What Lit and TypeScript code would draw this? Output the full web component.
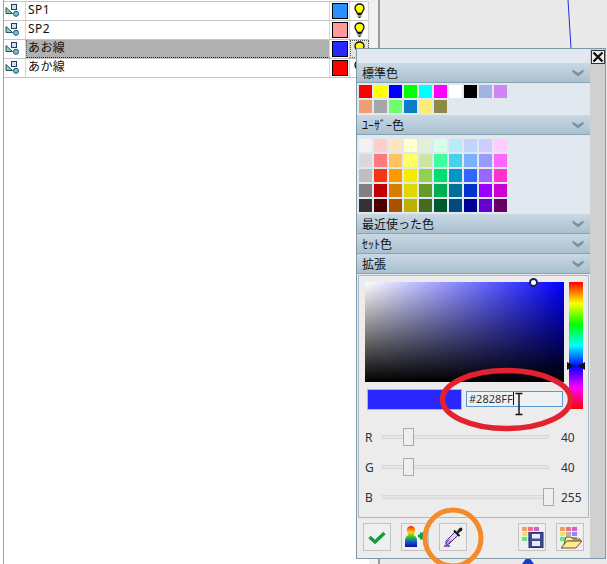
import { LitElement, html, css, svg } from "lit";
import { customElement } from "lit/decorators.js";

const STD = ["#ff0000","#ffff00","#0000ff","#00ff00","#00ffff","#ff00ff","#ffffff","#000000","#9fb4e3","#d085f5",
  "#ee9f72","#a6a6a6","#6cff6c","#0b7cc7","#ffec73","#8c8a46"];
const USER = [
  "#f2f2f2","#ffcccc","#ffe4c2","#ffffcc","#e4efd8","#d4ffe8","#b4ecfa","#c0d4ff","#ccccff","#ffccff",
  "#d9d9d9","#ff7a7a","#ffc25c","#ffff66","#cde5a3","#3dff9e","#45d0ec","#7ab0ff","#9999ff","#ff66ff",
  "#bfbfbf","#f53516","#ff9900","#f5ec00","#92d050","#00e070","#0098c8","#3366ff","#9966ff","#ff33cc",
  "#808080","#c00000","#d67e00","#e0d800","#669a2a","#00b050","#007098","#0033cc","#9900ff","#cc00cc",
  "#333333","#4d0000","#a85200","#bdb000","#446b1f","#005a2b","#004a80","#000099","#6600cc","#660066"];
const ROWS = [
  { name: "SP1", color: "#2a90ff", sel: false },
  { name: "SP2", color: "#ff9a9a", sel: false },
  { name: "あお線", color: "#2828ff", sel: true },
  { name: "あか線", color: "#ff0000", sel: false },
];
const SLIDERS = [
  { l: "R", v: 40, x: 21 },
  { l: "G", v: 40, x: 21 },
  { l: "B", v: 255, x: 161 },
];

const chevron = html`<svg class="chev" width="12" height="8" viewBox="0 0 12 8"><path d="M0.5 0.5 L6 4 L11.5 0.5 L11.5 3 L6 7.5 L0.5 3 Z" fill="#7f8e99"/></svg>`;
const rowIcon = html`<svg class="ri" width="16" height="16" viewBox="0 0 16 16">
  <path d="M1 4.5 L1 10.5 L7.5 10.5 Z" fill="#8fd0b0" stroke="#1f4f6a"/>
  <rect x="6.5" y="1.5" width="5" height="5" fill="#cfe0f0" stroke="#1f3f6a"/>
  <circle cx="11" cy="10.8" r="2.5" fill="#6fc8d0" stroke="#1f4f6a"/>
</svg>`;
const bulb = html`<svg width="11" height="16" viewBox="0 0 11 16">
  <path d="M5.5 1 C2.6 1 1 3 1 5.2 C1 7.4 3 8.4 3.3 10.5 L7.7 10.5 C8 8.4 10 7.4 10 5.2 C10 3 8.4 1 5.5 1 Z" fill="#ffff00" stroke="#111" stroke-width="1.3"/>
  <path d="M3.5 11.5 H7.5 M3.5 13 H7.5 M4.5 14.5 H6.5" stroke="#222" stroke-width="1.1"/>
</svg>`;
const grid = svg`
  <rect x="1" y="1" width="5" height="4" fill="#f0a070"/><rect x="7" y="1" width="5" height="4" fill="#f07080"/><rect x="13" y="1" width="5" height="4" fill="#d060d0"/>
  <rect x="1" y="6" width="5" height="4" fill="#f0e070"/><rect x="7" y="6" width="5" height="4" fill="#b0b0b0"/><rect x="13" y="6" width="5" height="4" fill="#a080e0"/>
  <rect x="1" y="11" width="5" height="4" fill="#70e080"/><rect x="7" y="11" width="5" height="4" fill="#70c0d0"/><rect x="13" y="11" width="5" height="4" fill="#80a0e0"/>`;

@customElement("app-root")
export class AppRoot extends LitElement {
  static styles = css`
    :host { display: block; position: relative; width: 607px; height: 564px; overflow: hidden; background: #fff;
      font-family: "Liberation Sans", "Noto Sans CJK JP", sans-serif; font-size: 12px; color: #111; }
    .page { display: flex; height: 564px; padding-left: 3px; box-sizing: border-box; }
    .list { width: 366px; flex: none; border-left: 1px solid #a0a0a0; padding-top: 1px; box-sizing: border-box; }
    .row { display: grid; grid-template-columns: 22px 304px 20px 19px; border-top: 1px solid #c4c4c4; height: 18px; }
    .row:last-child { border-bottom: 1px solid #c4c4c4; }
    .cell { display: flex; align-items: center; border-right: 1px solid #d4d4d4; min-width: 0; }
    .ri { margin-left: 1px; }
    .name { padding: 0 0 2px 2px; box-sizing: border-box; letter-spacing: .4px; line-height: 16px; font-family: "Noto Sans", "Noto Sans CJK JP", sans-serif; }
    .sel .name { background: #b0b0b0; border-bottom: 1px dotted #222; border-left: 1px dotted #666; padding: 0 0 1px 1px; }
    .sel .bc { background: #e4e4e4; outline: 1px dotted #555; outline-offset: -1px; }
    .swatch { width: 16px; height: 16px; box-sizing: border-box; border: 1px solid #000; margin-left: 2px; }
    .bc { justify-content: center; }
    .gutter { width: 9px; flex: none; background: #f0f0f0; }
    .pane { flex: 1; background: #e9e9e9; border-left: 2px solid #9c9c9c; }

    .canvas { position: absolute; left: 0; top: 0; pointer-events: none; }

    .popup { position: absolute; left: 356px; top: 48px; width: 250px; height: 511px; box-sizing: border-box;
      border: 1px solid #8299a8; background: #d0d0d0; display: flex; }
    .main { width: 233px; flex: none; background: #e1e8f0; display: flex; flex-direction: column; }
    .top { height: 14px; flex: none; }
    .head { height: 20px; flex: none; box-sizing: border-box; display: flex; align-items: center; justify-content: space-between;
      padding: 0 6px 1px 5px; background: linear-gradient(#c9d8e3, #a9c0cf); border-bottom: 1px solid #8aa3b2;
      font-family: "Noto Sans CJK JP", sans-serif; font-size: 12px; color: #111; }
    .chev { margin-top: 1px; }
    .colors { display: grid; grid-template-columns: repeat(10, 13px); gap: 2px; padding: 2px 2px; flex: none; }
    .colors.u { padding: 4px 2px 2px; }
    .colors div { height: 13px; }
    .ext { flex: 1; background: #ececec; display: flex; flex-direction: column; }
    .panel { margin: 1px 1px 0 1px; height: 243px; box-sizing: border-box; border: 1px solid #a9bac6; background: #ececec;
      padding: 6px 0 0 6px; display: flex; flex-direction: column; }
    .pick { display: flex; gap: 5px; height: 127px; }
    .left { width: 199px; }
    .sv { width: 199px; height: 100px; position: relative; background: linear-gradient(to top, #000, transparent), linear-gradient(to right, #fff, #00f); }
    .ring { position: absolute; left: 164px; top: -4px; width: 5px; height: 5px; border: 2px solid #1c2250; border-radius: 50%; background: #fff; }
    .under { display: flex; align-items: flex-start; margin-top: 7px; padding-left: 2px; }
    .preview { width: 95px; height: 21px; background: #2828ff; box-sizing: border-box; border: 1px solid #a9bac6; flex: none; }
    .hex { margin: 2px 0 0 4px; width: 97px; height: 16px; box-sizing: border-box; border: 1px solid #5a9ad0; background: #eef1f4;
      padding-left: 2px; line-height: 14px; font-family: "Noto Sans", sans-serif; font-size: 11px; color: #333; }
    .caret { display: inline-block; width: 1px; height: 13px; background: #111; vertical-align: -2px; }
    .hue { width: 14px; height: 127px; position: relative; background: linear-gradient(#f00, #ff0 16.6%, #0f0 33.3%, #0ff 50%, #00f 66.6%, #f0f 83.3%, #f00); }
    .hl { position: absolute; top: 80px; width: 0; height: 0; border-top: 4px solid transparent; border-bottom: 4px solid transparent; }
    .hl.a { left: -2px; border-left: 7px solid #111; }
    .hl.b { right: -2px; border-right: 7px solid #111; }
    .sliders { display: flex; flex-direction: column; gap: 12px; margin-top: 19px; }
    .sl { display: flex; align-items: center; height: 18px; font-family: "Noto Sans", sans-serif; font-size: 12px; color: #333; }
    .sl .lab { width: 17px; flex: none; }
    .track { width: 167px; height: 4px; border: 1px solid #d8d8d8; background: #e6e6e6; box-sizing: border-box; position: relative; flex: none; }
    .thumb { position: absolute; top: -8px; width: 11px; height: 18px; box-sizing: border-box; background: #efefef; border: 1px solid #aaa; }
    .val { margin-left: 12px; }
    .btns { display: flex; padding: 5px 0 0 6px; gap: 10px; }
    .btn { width: 28px; height: 28px; box-sizing: border-box; border: 1px solid #c2c2c2; background: #efefef; display: flex; align-items: center; justify-content: center; padding: 0; }
    .sp { width: 31px; flex: none; }
    .strip { flex: 1; }
    .close { position: absolute; right: 0; top: 1px; width: 14px; height: 14px; box-sizing: border-box; border: 1px solid #333; background: #eef1f4; padding: 0; display: flex; align-items: center; justify-content: center; }
  `;

  render() {
    return html`
      <div class="page">
        <div class="list">
          ${ROWS.map(r => html`<div class="row ${r.sel ? "sel" : ""}">
            <div class="cell">${rowIcon}</div>
            <div class="cell name">${r.name}</div>
            <div class="cell"><div class="swatch" style="background:${r.color}"></div></div>
            <div class="cell bc">${bulb}</div>
          </div>`)}
        </div>
        <div class="gutter"></div>
        <div class="pane"></div>
      </div>
      <svg class="canvas" width="607" height="564" viewBox="0 0 607 564">
        <path d="M568 0 L571 48" stroke="#2a2ae0" fill="none"/>
        <path d="M528 556 L522 564 L534 564 Z" fill="#1a3ad0"/>
      </svg>
      <div class="popup">
        <div class="main">
          <div class="top"></div>
          <div class="head"><span>標準色</span>${chevron}</div>
          <div class="colors">${STD.map(c => html`<div style="background:${c}"></div>`)}</div>
          <div class="head"><span>ﾕｰｻﾞｰ色</span>${chevron}</div>
          <div class="colors u">${USER.map(c => html`<div style="background:${c}"></div>`)}</div>
          <div class="head"><span>最近使った色</span>${chevron}</div>
          <div class="head"><span>ｾｯﾄ色</span>${chevron}</div>
          <div class="head"><span>拡張</span>${chevron}</div>
          <div class="ext">
            <div class="panel">
              <div class="pick">
                <div class="left">
                  <div class="sv"><div class="ring"></div></div>
                  <div class="under">
                    <div class="preview"></div>
                    <div class="hex">#2828FF<span class="caret"></span></div>
                  </div>
                </div>
                <div class="hue"><div class="hl a"></div><div class="hl b"></div></div>
              </div>
              <div class="sliders">
                ${SLIDERS.map(s => html`<div class="sl">
                  <div class="lab">${s.l}</div>
                  <div class="track"><div class="thumb" style="left:${s.x - 1}px"></div></div>
                  <div class="val">${s.v}</div>
                </div>`)}
              </div>
            </div>
            <div class="btns">
              <button class="btn"><svg width="20" height="20" viewBox="0 0 20 20"><path d="M2.5 10 L8 15 L17.5 6" fill="none" stroke="#169a3c" stroke-width="3.4"/></svg></button>
              <button class="btn"><svg width="24" height="24" viewBox="0 0 24 24">
                <defs><linearGradient id="rb" x1="0" y1="0" x2="0" y2="1"><stop offset="0" stop-color="#ff2020"/><stop offset=".3" stop-color="#ffd000"/><stop offset=".55" stop-color="#20c040"/><stop offset=".8" stop-color="#1040e0"/><stop offset="1" stop-color="#101090"/></linearGradient></defs>
                <path d="M8 1 C11 1 12.5 3.5 12 6 C11.7 8 11 9 10.5 10 C12.5 11 13.5 12 14 15 L14 22 L2 22 L2 15 C2.5 12 3.5 11 5.5 10 C5 9 4.3 8 4 6 C3.5 3.5 5 1 8 1 Z" fill="url(#rb)"/>
                <path d="M15 11 H22 M18.5 7.5 V14.5" stroke="#14a040" stroke-width="3"/>
              </svg></button>
              <button class="btn"><svg width="24" height="24" viewBox="0 0 24 24">
                <path d="M14 7 L17 10 L8 19 L5 19.5 L5 16 Z" fill="#e4d0f4" stroke="#503070"/>
                <path d="M10 13 L5 19.5 L5 17 Z M11 14 L6 19.5 L9 18 Z" fill="#8040c8"/>
                <path d="M3 21 H9" stroke="#9050d0" stroke-width="2"/>
                <path d="M13 5.5 L18.5 11" stroke="#111" stroke-width="2"/>
                <path d="M15.5 7 L18.5 3 Q20 2 21 3 Q22 4 21 5.5 L17 8.5 Z" fill="#222"/>
              </svg></button>
              <div class="sp"></div>
              <button class="btn"><svg width="24" height="24" viewBox="0 0 24 24">
                <g transform="translate(1,1)">${grid}</g>
                <rect x="9" y="7.5" width="14" height="15" fill="#3c4a98" stroke="#28306a"/>
                <rect x="12" y="9" width="8" height="4.5" fill="#e8ecf8"/>
                <rect x="12" y="16" width="8" height="5" fill="#e8ecf8"/>
              </svg></button>
              <button class="btn"><svg width="24" height="24" viewBox="0 0 24 24">
                <g transform="translate(1,1)">${grid}</g>
                <path d="M8 12 H13 L15 14 H22 L22 16 H11 L4 23 H5 Z" fill="#f8e8a0" stroke="#6a5a20"/>
                <path d="M9 16 H24 L18 23 H3 Z" fill="#ffe98c" stroke="#6a5a20"/>
              </svg></button>
            </div>
          </div>
        </div>
        <div class="strip"></div>
        <button class="close"><svg width="12" height="12" viewBox="0 0 12 12"><path d="M1.5 1.5 L10.5 10.5 M10.5 1.5 L1.5 10.5" stroke="#111" stroke-width="2.4"/></svg></button>
      </div>
      <svg class="canvas" width="607" height="564" viewBox="0 0 607 564">
        <ellipse cx="506.5" cy="399.5" rx="64" ry="29" fill="none" stroke="#e2222e" stroke-width="5.5"/>
        <circle cx="453" cy="538" r="28" fill="none" stroke="#f58a2a" stroke-width="5"/>
        <g stroke="#111" stroke-width="1.4" fill="none"><path d="M519 394 V414 M515.5 393.5 H522.5 M515.5 414.5 H522.5"/></g>
      </svg>
    `;
  }
}
